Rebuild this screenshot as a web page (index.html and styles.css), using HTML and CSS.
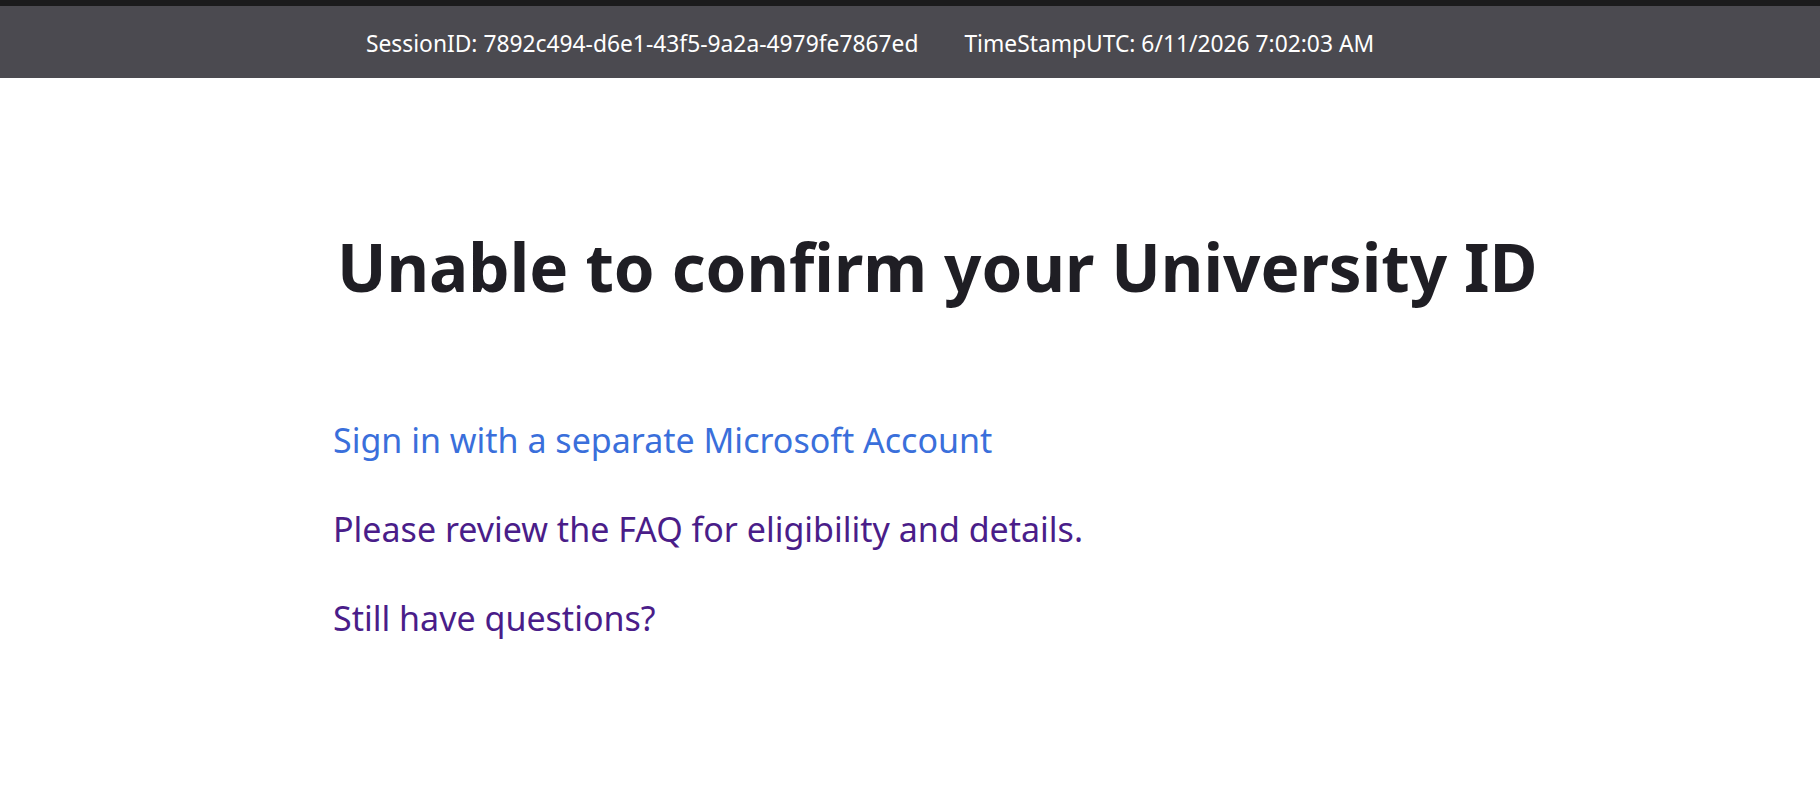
FILE: index.html
```html
<!DOCTYPE html>
<html lang="en">
<head>
<meta charset="utf-8">
<title>Unable to confirm your University ID</title>
<link rel="stylesheet" href="styles.css">
</head>
<body>
<header class="session-bar">
  <span class="session-item">SessionID: 7892c494-d6e1-43f5-9a2a-4979fe7867ed</span>
  <span class="session-item">TimeStampUTC: 6/11/2026 7:02:03 AM</span>
</header>
<main class="content">
  <h1 class="title">Unable to confirm your University ID</h1>
  <p class="line"><a class="link link-primary" href="#">Sign in with a separate Microsoft Account</a></p>
  <p class="line"><a class="link link-visited" href="#">Please review the FAQ for eligibility and details.</a></p>
  <p class="line"><a class="link link-visited" href="#">Still have questions?</a></p>
</main>
</body>
</html>
```
FILE: styles.css
```css
html, body {
  margin: 0;
  padding: 0;
  background: #ffffff;
}
body {
  font-family: "Noto Sans", "Open Sans", sans-serif;
  color: #1f1e24;
}
.session-bar {
  display: flex;
  align-items: center;
  gap: 46px;
  height: 69px;
  padding: 3px 0 0 366px;
  background: #4b4a50;
  border-top: 6px solid #1b1b1c;
  color: #ffffff;
  font-size: 22.8px;
}
.session-item {
  white-space: nowrap;
}
.content {
  padding-left: 333px;
}
.title {
  margin: 150px 0 0 4px;
  font-size: 65.5px;
  line-height: 78px;
  font-weight: 700;
  color: #1f1e24;
  white-space: nowrap;
}
.line {
  margin: 0;
  font-size: 34px;
  line-height: 41px;
}
.title + .line {
  margin-top: 114px;
}
.line + .line {
  margin-top: 48px;
}
.link {
  text-decoration: none;
}
.link-primary {
  color: #3a6fdb;
}
.link-visited {
  color: #4a1d89;
}
```
